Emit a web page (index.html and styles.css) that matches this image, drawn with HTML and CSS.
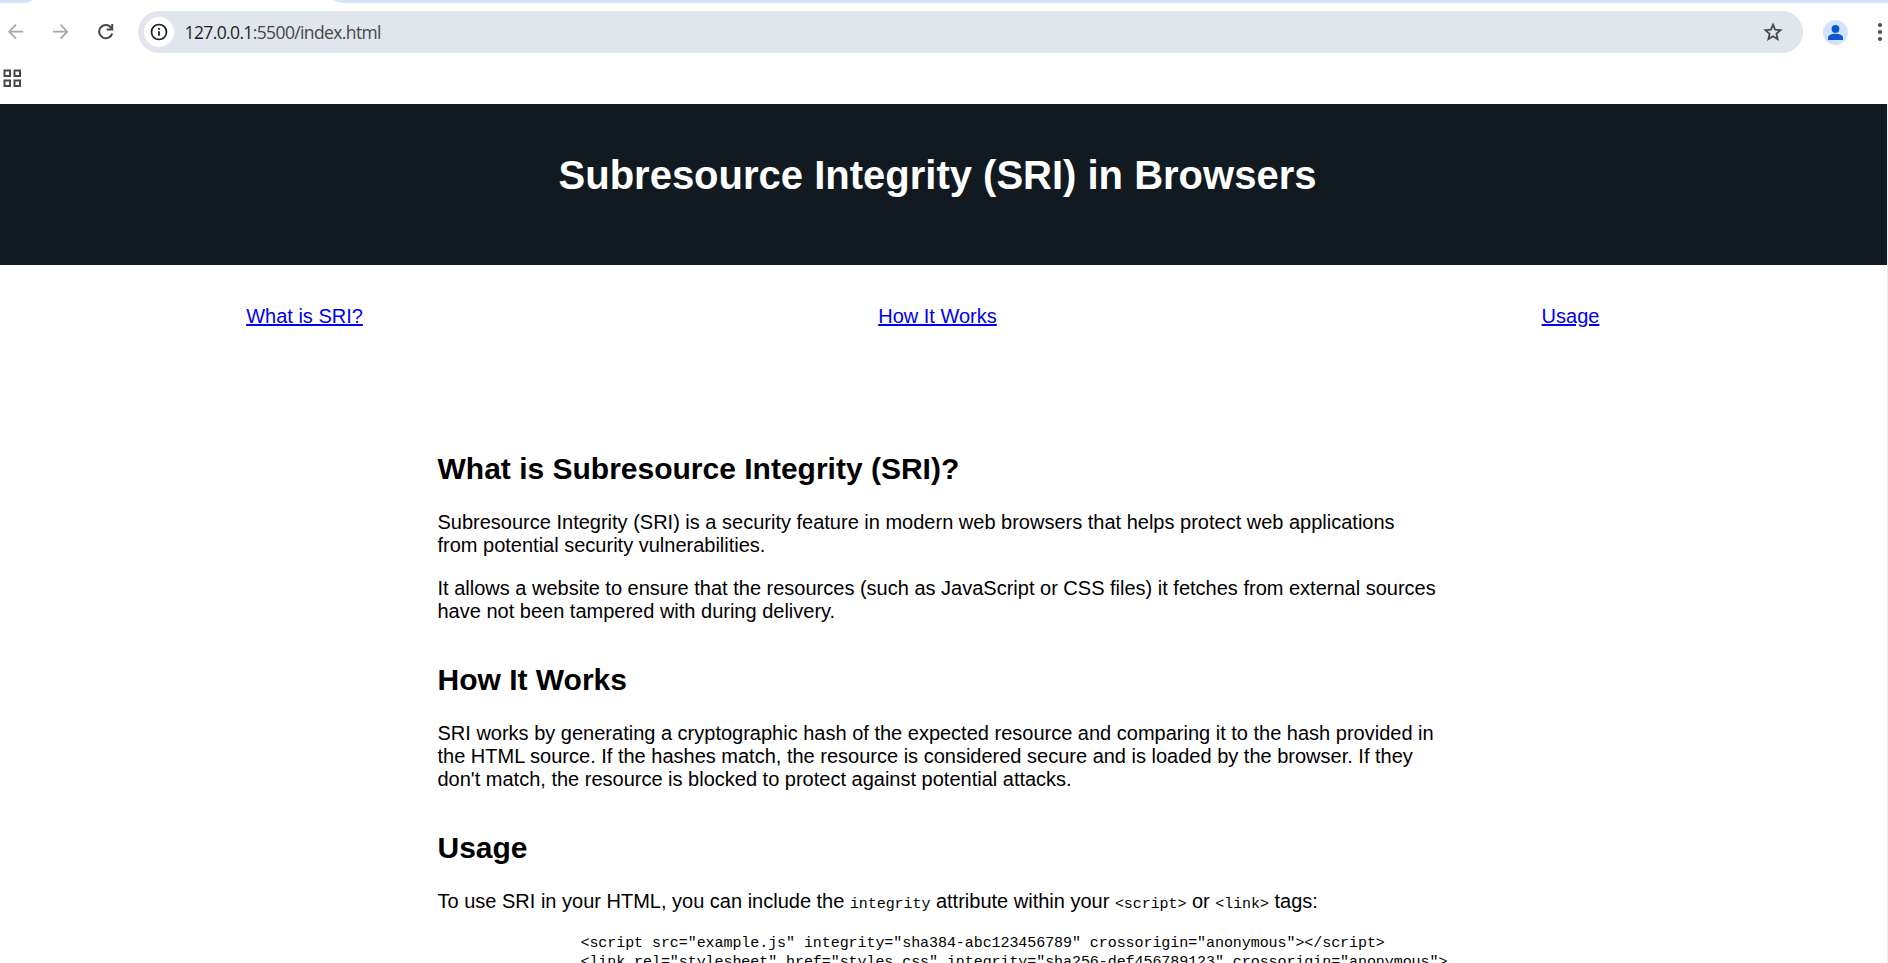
FILE: index.html
```html
<!DOCTYPE html>
<html lang="en">
<head>
<meta charset="utf-8">
<title>Subresource Integrity (SRI) in Browsers</title>
<link rel="stylesheet" href="styles.css">
</head>
<body>
<div class="chrome">
  <div class="tabstrip">
    <svg width="1888" height="3" viewBox="0 0 1888 3"><path d="M0 0H33Q29 3 23 3H0ZM333 0H1888V3H344Q338 3 333 0Z" fill="#d3e3fd"/></svg>
  </div>
  <div class="toolbar">
    <svg class="nav-icon" width="16" height="16" viewBox="0 0 16 16" fill="none" stroke="#a9a9a9" stroke-width="1.8"><path d="M15.200 7.700H1.500M8 .7 1.200 7.700 8 14.700"/></svg>
    <svg class="nav-icon" width="16" height="16" viewBox="0 0 16 16" fill="none" stroke="#a9a9a9" stroke-width="1.8"><path d="M0 7.700h13.700M7.500.7l6.700 7-6.700 7"/></svg>
    <svg class="nav-icon" width="16" height="16" viewBox="0 0 16 16" fill="none" stroke="#474747" stroke-width="2"><path d="M14.200 9.400A6.600 6.600 0 1 1 12.700 3.200L14 4.600"/><path d="M14.200 0v5.600H8.700"/></svg>
    <div class="omnibox">
      <span class="site-info"><svg width="18" height="18" viewBox="0 0 18 18"><circle cx="9" cy="9" r="7.500" fill="none" stroke="#1f1f1f" stroke-width="1.700"/><path d="M8.100 8.200h1.800v4.600H8.100zM8.100 5h1.800v1.800H8.100z" fill="#1f1f1f"/></svg></span>
      <span class="url"><span class="host">127.0.0.1</span>:5500/index.html</span>
      <svg class="star" width="20" height="20" viewBox="0 0 20 20"><path d="M10 2.700 12.100 7.700 17.500 8.200 13.400 11.800 14.600 17.200 10 14.300 5.400 17.200 6.600 11.800 2.500 8.200 7.900 7.700Z" fill="none" stroke="#474747" stroke-width="1.800"/></svg>
    </div>
    <svg class="avatar" width="25" height="25" viewBox="0 0 25 25"><circle cx="12.500" cy="12.500" r="12.500" fill="#d3e3fd"/><circle cx="12.500" cy="8.900" r="3.900" fill="#0b57d0"/><path d="M5 20v-2.200c0-2.600 4-4 7.500-4s7.500 1.400 7.500 4V20Z" fill="#0b57d0"/></svg>
    <svg class="menu" width="6" height="18" viewBox="0 0 6 18" fill="#474747"><circle cx="3" cy="2" r="2"/><circle cx="3" cy="9" r="2"/><circle cx="3" cy="16" r="2"/></svg>
  </div>
  <div class="bookmarks">
    <svg width="19" height="19" viewBox="0 0 19 19" fill="none" stroke="#474747" stroke-width="2"><path d="M1.500 1.500h5.500v5.500h-5.500zM11.500 1.500h5.500v5.500h-5.500zM1.500 11.500h5.500v5.500h-5.500zM11.500 11.500h5.500v5.500h-5.500z"/></svg>
  </div>
</div>
<div class="viewport">
  <div class="page">
    <header class="hero"><h1>Subresource Integrity (SRI) in Browsers</h1></header>
    <nav class="links">
      <div><a href="#what">What is SRI?</a></div>
      <div><a href="#how">How It Works</a></div>
      <div><a href="#usage">Usage</a></div>
    </nav>
    <main class="content">
      <section id="what">
        <h2>What is Subresource Integrity (SRI)?</h2>
        <p>Subresource Integrity (SRI) is a security feature in modern web browsers that helps protect web applications from potential security vulnerabilities.</p>
        <p>It allows a website to ensure that the resources (such as JavaScript or CSS files) it fetches from external sources have not been tampered with during delivery.</p>
      </section>
      <section id="how">
        <h2>How It Works</h2>
        <p>SRI works by generating a cryptographic hash of the expected resource and comparing it to the hash provided in the HTML source. If the hashes match, the resource is considered secure and is loaded by the browser. If they don't match, the resource is blocked to protect against potential attacks.</p>
      </section>
      <section id="usage">
        <h2>Usage</h2>
        <p>To use SRI in your HTML, you can include the <code>integrity</code> attribute within your <code>&lt;script&gt;</code> or <code>&lt;link&gt;</code> tags:</p>
        <pre>                &lt;script src="example.js" integrity="sha384-abc123456789" crossorigin="anonymous"&gt;&lt;/script&gt;
                &lt;link rel="stylesheet" href="styles.css" integrity="sha256-def456789123" crossorigin="anonymous"&gt;</pre>
      </section>
    </main>
  </div>
  <div class="scroll-edge"></div>
</div>
</body>
</html>
```
FILE: styles.css
```css
* { box-sizing: border-box; }
body {
  margin: 0;
  height: 963px;
  overflow: hidden;
  background: #fff;
  color: #000;
  font-family: "Liberation Sans", Arial, sans-serif;
  font-size: 20px;
}
svg { display: block; flex: none; }

.chrome { height: 104px; }
.tabstrip { height: 3px; }
.toolbar {
  display: flex;
  align-items: center;
  height: 58px;
  padding-left: 8px;
}
.nav-icon { margin-right: 29px; }
.omnibox {
  display: flex;
  align-items: center;
  width: 1665px;
  height: 42px;
  margin-left: -5px;
  padding: 0 20px 0 6px;
  border-radius: 21px;
  background: #e1e6ed;
}
.site-info {
  display: flex;
  align-items: center;
  justify-content: center;
  width: 30px;
  height: 30px;
  border-radius: 50%;
  background: #fff;
}
.url {
  margin-left: 10.5px;
  color: #474747;
  font-family: "Open Sans", "Noto Sans", sans-serif;
  font-size: 17.5px;
  letter-spacing: -0.62px;
}
.host { color: #1f1f1f; }
.star { margin-left: auto; }
.avatar { margin-left: 20px; }
.menu { margin-left: 29px; }
.bookmarks { padding: 8px 0 0 3px; }

.viewport {
  display: flex;
  height: 859px;
  overflow: hidden;
}
.page {
  flex: none;
  width: 1899px;
  margin-left: -12px;
}
.scroll-edge { width: 1px; background: #ececec; }

.hero {
  height: 161px;
  padding-top: 48px;
  background: #121a21;
  color: #fff;
  text-align: center;
}
h1 {
  margin: 0;
  font-size: 40px;
  line-height: 46px;
}
.links {
  display: flex;
  padding-top: 40px;
  line-height: 22px;
  text-align: center;
}
.links div { flex: 1; }
a {
  color: #0000ee;
  text-decoration-thickness: 2px;
}

.content {
  width: 1000px;
  margin: 125px auto 0;
}
section { padding-bottom: 14px; }
section + section { padding-top: 6px; }
h2 {
  margin: 0;
  padding-bottom: 26px;
  font-size: 30px;
  line-height: 33px;
}
p {
  margin: 0 0 20px;
  line-height: 23px;
}
code, pre {
  font-family: "Liberation Mono", monospace;
  font-size: 15px;
  letter-spacing: -0.065px;
}
code { line-height: 1; }
pre {
  margin: 21px 0 0;
  line-height: 19px;
}
```
